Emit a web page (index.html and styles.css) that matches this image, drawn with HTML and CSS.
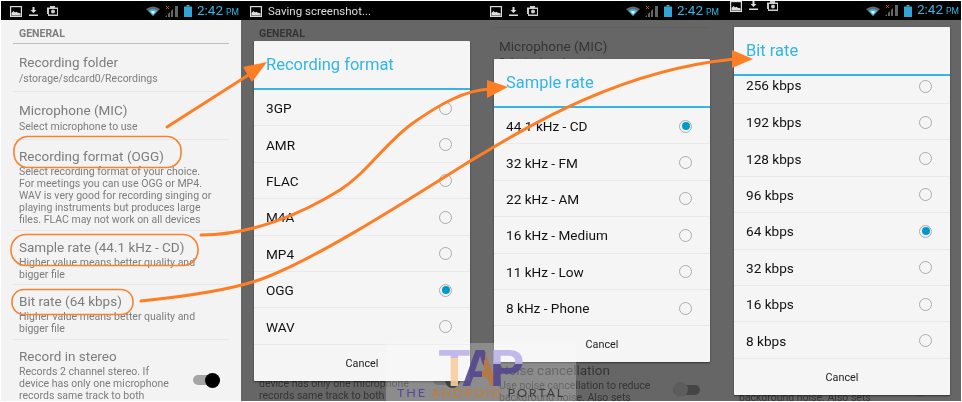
FILE: index.html
```html
<!DOCTYPE html>
<html lang="en">
<head>
<meta charset="utf-8">
<title>Recording settings</title>
<link rel="stylesheet" href="styles.css">
</head>
<body>
<svg class="defs" aria-hidden="true">
  <symbol id="i-image" viewBox="0 0 12 11"><rect x=".6" y=".6" width="10.8" height="9.8" fill="none" stroke="#ddd" stroke-width="1.2"/><path d="M1.5 9.5V7l2-2 1.6 1.6 1.2-.9 1.6 1 2.6.6v2.2z" fill="#ddd"/></symbol>
  <symbol id="i-down" viewBox="0 0 9 9"><path d="M3.5 0h2v3h2L4.500 6 1.500 3h2zM0 7.600h9V9H0z" fill="#ddd"/></symbol>
  <symbol id="i-cam" viewBox="0 0 11 10"><path d="M3 0h5v1.500h3V10H1V8H0V1.500h3zM2 3v5.600h8V3z" fill="#ccc"/><circle cx="6" cy="5.500" r="2" fill="#ccc"/></symbol>
  <symbol id="i-wifi" viewBox="0 0 14 10"><path d="M0 3Q7-2 14 3l-7 7z" fill="#666"/><path d="M2.500 4.500Q7 1.500 11.500 4.500L7 10z" fill="#33b5e5"/><path d="M4.700 5.700Q7 4.500 9.300 5.700L7 8z" fill="#fff"/></symbol>
  <symbol id="i-signal" viewBox="0 0 13 11"><path d="M0 11l2-2v2zM3 11V8l2-2v5zM6 11V5l2-2v8zM10 11V0h3v11z" fill="#666"/><path d="M1 0l3 3M4 0L1 3" stroke="#d33" stroke-width="1"/></symbol>
  <symbol id="i-batt" viewBox="0 0 8 12"><path d="M2.500 0h3v1.500h-3z" fill="#999"/><path d="M0 1.500h8V12H0z" fill="#33a5d5"/></symbol>
</svg>

<main class="page">
  <section class="phone">
    <header class="status">
      <svg class="ic ic-image"><use href="#i-image"/></svg>
      <svg class="ic ic-down"><use href="#i-down"/></svg>
      <svg class="ic ic-cam"><use href="#i-cam"/></svg>
      <div class="status-right">
        <svg class="ic ic-wifi"><use href="#i-wifi"/></svg>
        <svg class="ic ic-signal"><use href="#i-signal"/></svg>
        <svg class="ic ic-batt"><use href="#i-batt"/></svg>
        <span class="time">2:42<small>PM</small></span>
      </div>
    </header>
    <div class="body">
      <div class="list">
        <h2 class="group">GENERAL</h2>
        <div class="item"><h3>Recording folder</h3><p>/storage/sdcard0/Recordings</p></div>
        <div class="item"><h3>Microphone (MIC)</h3><p>Select microphone to use</p></div>
        <div class="item tight"><h3>Recording format (OGG)</h3><p>Select recording format of your choice.<br>For meetings you can use OGG or MP4.<br>WAV is very good for recording singing or<br>playing instruments but produces large<br>files. FLAC may not work on all devices</p></div>
        <div class="item tight"><h3>Sample rate (44.1 kHz - CD)</h3><p>Higher value means better quality and<br>bigger file</p></div>
        <div class="item tight"><h3>Bit rate (64 kbps)</h3><p>Higher value means better quality and<br>bigger file</p></div>
        <div class="item tight toggled"><div class="copy"><h3>Record in stereo</h3><p>Records 2 channel stereo. If<br>device has only one microphone<br>records same track to both<br>channels</p></div><span class="switch on"></span></div>
      </div>
    </div>
  </section>

  <section class="phone dim">
    <header class="status">
      <svg class="ic ic-image"><use href="#i-image"/></svg>
      <span class="ticker">Saving screenshot...</span>
    </header>
    <div class="body">
      <div class="list">
        <h2 class="group">GENERAL</h2>
        <div class="item"><h3>Recording folder</h3><p>/storage/sdcard0/Recordings</p></div>
        <div class="item"><h3>Microphone (MIC)</h3><p>Select microphone to use</p></div>
        <div class="item tight"><h3>Recording format (OGG)</h3><p>Select recording format of your choice.<br>For meetings you can use OGG or MP4.<br>WAV is very good for recording singing or<br>playing instruments but produces large<br>files. FLAC may not work on all devices</p></div>
        <div class="item tight"><h3>Sample rate (44.1 kHz - CD)</h3><p>Higher value means better quality and<br>bigger file</p></div>
        <div class="item tight"><h3>Bit rate (64 kbps)</h3><p>Higher value means better quality and<br>bigger file</p></div>
        <div class="item tight toggled"><div class="copy"><h3>Record in stereo</h3><p>Records 2 channel stereo. If<br>device has only one microphone<br>records same track to both<br>channels</p></div><span class="switch on"></span></div>
      </div>
      <div class="dialog dialog-format">
        <h2 class="dialog-title">Recording format</h2>
        <div class="opt"><span>3GP</span><i class="radio"></i></div>
        <div class="opt"><span>AMR</span><i class="radio"></i></div>
        <div class="opt"><span>FLAC</span><i class="radio"></i></div>
        <div class="opt"><span>M4A</span><i class="radio"></i></div>
        <div class="opt"><span>MP4</span><i class="radio"></i></div>
        <div class="opt"><span>OGG</span><i class="radio sel"></i></div>
        <div class="opt"><span>WAV</span><i class="radio"></i></div>
        <div class="cancel">Cancel</div>
      </div>
    </div>
  </section>

  <section class="phone dim">
    <header class="status">
      <svg class="ic ic-image"><use href="#i-image"/></svg>
      <svg class="ic ic-down"><use href="#i-down"/></svg>
      <svg class="ic ic-cam"><use href="#i-cam"/></svg>
      <div class="status-right">
        <svg class="ic ic-wifi"><use href="#i-wifi"/></svg>
        <svg class="ic ic-signal"><use href="#i-signal"/></svg>
        <svg class="ic ic-batt"><use href="#i-batt"/></svg>
        <span class="time">2:42<small>PM</small></span>
      </div>
    </header>
    <div class="body">
      <div class="list scrolled">
        <h2 class="group">GENERAL</h2>
        <div class="item"><h3>Recording folder</h3><p>/storage/sdcard0/Recordings</p></div>
        <div class="item"><h3>Microphone (MIC)</h3><p>Select microphone to use</p></div>
        <div class="item tight"><h3>Recording format (OGG)</h3><p>Select recording format of your choice.<br>For meetings you can use OGG or MP4.<br>WAV is very good for recording singing or<br>playing instruments but produces large<br>files. FLAC may not work on all devices</p></div>
        <div class="item tight"><h3>Sample rate (44.1 kHz - CD)</h3><p>Higher value means better quality and<br>bigger file</p></div>
        <div class="item tight"><h3>Bit rate (64 kbps)</h3><p>Higher value means better quality and<br>bigger file</p></div>
        <div class="item tight toggled"><div class="copy"><h3>Record in stereo</h3><p>Records 2 channel stereo. If<br>device has only one microphone<br>records same track to both<br>channels</p></div><span class="switch on"></span></div>
        <div class="item tight toggled"><div class="copy"><h3>Noise cancellation</h3><p>Use noise cancellation to reduce<br>background noise. Also sets</p></div><span class="switch off"></span></div>
      </div>
      <div class="dialog dialog-sample">
        <h2 class="dialog-title">Sample rate</h2>
        <div class="opt"><span>44.1 kHz - CD</span><i class="radio sel"></i></div>
        <div class="opt"><span>32 kHz - FM</span><i class="radio"></i></div>
        <div class="opt"><span>22 kHz - AM</span><i class="radio"></i></div>
        <div class="opt"><span>16 kHz - Medium</span><i class="radio"></i></div>
        <div class="opt"><span>11 kHz - Low</span><i class="radio"></i></div>
        <div class="opt"><span>8 kHz - Phone</span><i class="radio"></i></div>
        <div class="cancel">Cancel</div>
      </div>
    </div>
  </section>

  <section class="phone dim raised">
    <header class="status">
      <svg class="ic ic-image"><use href="#i-image"/></svg>
      <svg class="ic ic-down"><use href="#i-down"/></svg>
      <svg class="ic ic-cam"><use href="#i-cam"/></svg>
      <div class="status-right">
        <svg class="ic ic-wifi"><use href="#i-wifi"/></svg>
        <svg class="ic ic-signal"><use href="#i-signal"/></svg>
        <svg class="ic ic-batt"><use href="#i-batt"/></svg>
        <span class="time">2:42<small>PM</small></span>
      </div>
    </header>
    <div class="body">
      <div class="list scrolled">
        <h2 class="group">GENERAL</h2>
        <div class="item"><h3>Recording folder</h3><p>/storage/sdcard0/Recordings</p></div>
        <div class="item"><h3>Microphone (MIC)</h3><p>Select microphone to use</p></div>
        <div class="item tight"><h3>Recording format (OGG)</h3><p>Select recording format of your choice.<br>For meetings you can use OGG or MP4.<br>WAV is very good for recording singing or<br>playing instruments but produces large<br>files. FLAC may not work on all devices</p></div>
        <div class="item tight"><h3>Sample rate (44.1 kHz - CD)</h3><p>Higher value means better quality and<br>bigger file</p></div>
        <div class="item tight"><h3>Bit rate (64 kbps)</h3><p>Higher value means better quality and<br>bigger file</p></div>
        <div class="item tight toggled"><div class="copy"><h3>Record in stereo</h3><p>Records 2 channel stereo. If<br>device has only one microphone<br>records same track to both<br>channels</p></div><span class="switch on"></span></div>
        <div class="item tight toggled"><div class="copy"><h3>Noise cancellation</h3><p>Use noise cancellation to reduce<br>background noise. Also sets</p></div><span class="switch off"></span></div>
      </div>
      <div class="dialog dialog-bitrate">
        <h2 class="dialog-title">Bit rate</h2>
        <div class="opt first"><span>256 kbps</span><i class="radio"></i></div>
        <div class="opt"><span>192 kbps</span><i class="radio"></i></div>
        <div class="opt"><span>128 kbps</span><i class="radio"></i></div>
        <div class="opt"><span>96 kbps</span><i class="radio"></i></div>
        <div class="opt"><span>64 kbps</span><i class="radio sel"></i></div>
        <div class="opt"><span>32 kbps</span><i class="radio"></i></div>
        <div class="opt"><span>16 kbps</span><i class="radio"></i></div>
        <div class="opt"><span>8 kbps</span><i class="radio"></i></div>
        <div class="cancel">Cancel</div>
      </div>
    </div>
  </section>

  <svg class="marks" viewBox="0 0 962 402" aria-hidden="true">
    <g class="ovals">
      <rect x="14" y="136.500" width="167" height="31" rx="14"/>
      <rect x="11" y="234.500" width="187" height="31" rx="15"/>
      <rect x="12" y="289.500" width="121" height="25" rx="12"/>
    </g>
    <g class="lines">
      <path d="M167 127L250 74"/>
      <path d="M201 235C250 235 300 215 340 190C368 172 385 143 413 123C440 104 465 90 490 89"/>
      <path d="M141 301C190 296 240 288 267 277C320 256 400 205 467 163C530 125 620 70 735 59"/>
    </g>
    <g class="heads">
      <polygon points="267,62 243,67 252,82"/>
      <polygon points="508,87 487,80 487,98"/>
      <polygon points="753,59 732,50 732,68"/>
    </g>
  </svg>

  <div class="watermark">
    <div class="wm-logo"><span class="wm-t">T</span><span class="wm-a">A</span><span class="wm-p">P</span></div>
    <div class="wm-name"><span class="wm-the">THE</span> <span class="wm-android">ANDROID</span> <span class="wm-portal">PORTAL</span></div>
  </div>
</main>
</body>
</html>
```

FILE: styles.css
```css
* { box-sizing: border-box; }

html, body {
  margin: 0;
  padding: 0;
  background: #fff;
}

.defs {
  position: absolute;
  width: 0;
  height: 0;
}

.page {
  position: relative;
  display: flex;
  width: 962px;
  height: 402px;
  padding: 1px;
  overflow: hidden;
  font-family: Roboto, "Liberation Sans", sans-serif;
}

.phone {
  position: relative;
  display: flex;
  flex-direction: column;
  width: 240px;
  height: 400px;
  overflow: hidden;
  filter: blur(0.3px);
}

/* status bar */
.status {
  flex: none;
  display: flex;
  align-items: center;
  height: 19px;
  padding: 1px 4px 0 9px;
  background: #000;
  color: #ddd;
}

.raised .status { padding-top: 0; align-items: flex-start; }

.ic { display: block; flex: none; }
.ic-image { width: 12px; height: 11px; }
.ic-down { width: 9px; height: 9px; margin-left: 7px; }
.ic-cam { width: 11px; height: 10px; margin-left: 9px; }
.ic-wifi { width: 14px; height: 10px; }
.ic-signal { width: 13px; height: 11px; margin-left: 5px; }
.ic-batt { width: 8px; height: 12px; margin-left: 6px; }

.status-right {
  display: flex;
  align-items: center;
  margin-left: auto;
}

.time {
  margin-left: 5px;
  width: 40px;
  color: #33b5e5;
  font-size: 13.500px;
  line-height: 17px;
}

.time small {
  margin-left: 3px;
  font-size: 8.500px;
}

.ticker {
  margin-left: 6px;
  font-size: 11.500px;
}

/* settings list */
.body {
  position: relative;
  flex: 1;
  overflow: hidden;
  background: #f3f3f3;
}

.dim .body { background: #616161; }

.list {
  padding: 0 12px;
  color: #7d7d7d;
}

.dim .list { filter: brightness(0.42); background: #f3f3f3; }
.list.scrolled { margin-top: -64px; }

.group {
  margin: 0;
  height: 24px;
  padding: 8px 0 0 6px;
  border-bottom: 1px solid #bcbcbc;
  font-size: 10.500px;
  line-height: 12px;
  font-weight: 700;
}

.item {
  padding: 9px 0 6px 6px;
  border-bottom: 1px solid #e8e8e8;
}

.item.tight { padding: 7px 0 3.500px 6px; }
.item.tight p { margin-top: 1px; }

.item h3 {
  margin: 0;
  font-size: 13.500px;
  line-height: 18px;
  font-weight: 400;
}

.item p {
  margin: 2px 0 0;
  font-size: 10.500px;
  line-height: 12px;
  white-space: nowrap;
}

.toggled {
  display: flex;
  align-items: flex-start;
  justify-content: space-between;
}

.switch {
  position: relative;
  flex: none;
  width: 27px;
  height: 10px;
  margin: 28.500px 9px 0 0;
  border-radius: 5px;
  background: #a5a5a5;
}

.switch.off { margin-top: 23.500px; }

.switch::after {
  content: "";
  position: absolute;
  top: -2.500px;
  width: 15px;
  height: 15px;
  border-radius: 50%;
}

.switch.on::after { right: 0; background: #000; }
.switch.off::after { left: 0; background: #ddd; }

/* dialogs */
.dialog {
  position: absolute;
  left: 13px;
  width: 216px;
  display: flex;
  flex-direction: column;
  background: #f5f5f5;
  border-radius: 1px;
  box-shadow: 0 1px 2px rgba(0, 0, 0, 0.5);
}

.dialog-format { top: 21px; }
.dialog-sample { top: 39px; }
.dialog-bitrate { top: 7px; }

.dialog-title {
  flex: none;
  height: 49px;
  margin: 0;
  padding: 0 12px;
  border-bottom: 2px solid #33b5e5;
  color: #33b5e5;
  font-size: 16.500px;
  font-weight: 400;
  line-height: 48px;
}

.opt {
  flex: none;
  display: flex;
  align-items: center;
  justify-content: space-between;
  height: 36.400px;
  padding: 1px 18px 0 12px;
  border-bottom: 1.500px solid #e9e9e9;
  color: #111;
  font-size: 13.600px;
}

.opt.first {
  height: 28px;
  padding-top: 0;
  padding-bottom: 10px;
  align-items: flex-end;
}

.radio {
  display: block;
  position: relative;
  width: 13px;
  height: 13px;
  border: 1px solid #ababab;
  border-radius: 50%;
}

.radio.sel::after {
  content: "";
  position: absolute;
  inset: 1.500px;
  border-radius: 50%;
  background: #0099cc;
}

.cancel {
  flex: none;
  height: 36px;
  color: #222;
  font-size: 10.800px;
  line-height: 38px;
  text-align: center;
}

/* annotations */
.marks {
  position: absolute;
  top: 0;
  left: 0;
  width: 962px;
  height: 402px;
  filter: blur(0.25px);
}

.ovals rect {
  fill: none;
  stroke: #f5832f;
  stroke-width: 1.600;
}

.lines path {
  fill: none;
  stroke: #fd7e24;
  stroke-width: 3;
  stroke-linecap: round;
}

.heads polygon { fill: #fd7e24; }

/* watermark */
.watermark {
  position: absolute;
  left: 386px;
  top: 343px;
  width: 190px;
  height: 59px;
  background: rgba(255, 255, 255, 0.25);
  display: flex;
  flex-direction: column;
  align-items: center;
}

.wm-logo {
  display: flex;
  height: 43px;
  margin-left: 1px;
  font-family: "Liberation Sans", sans-serif;
  font-size: 52px;
  font-weight: 700;
  line-height: 50px;
  opacity: 0.9;
}

.wm-logo span {
  color: transparent;
  -webkit-background-clip: text;
  background-clip: text;
}

.wm-a, .wm-p { margin-left: -9px; }

.wm-t { background-image: linear-gradient(#bdb3ea 0 34%, #f9cf9e 34% 100%); }
.wm-a { background-image: linear-gradient(100deg, #55468f 0 58%, #b8763d 58% 100%); }
.wm-p { background-image: linear-gradient(#bdb3ea 0 50%, #55468f 50% 100%); }

.wm-name {
  font-family: Lato, sans-serif;
  font-size: 12px;
  line-height: 14px;
  letter-spacing: 1.700px;
  white-space: nowrap;
  transform: scaleX(1.050);
}

.wm-the { color: #5548a0; }
.wm-android { color: #c97a30; }
.wm-portal { color: #3c3c3c; }
```
